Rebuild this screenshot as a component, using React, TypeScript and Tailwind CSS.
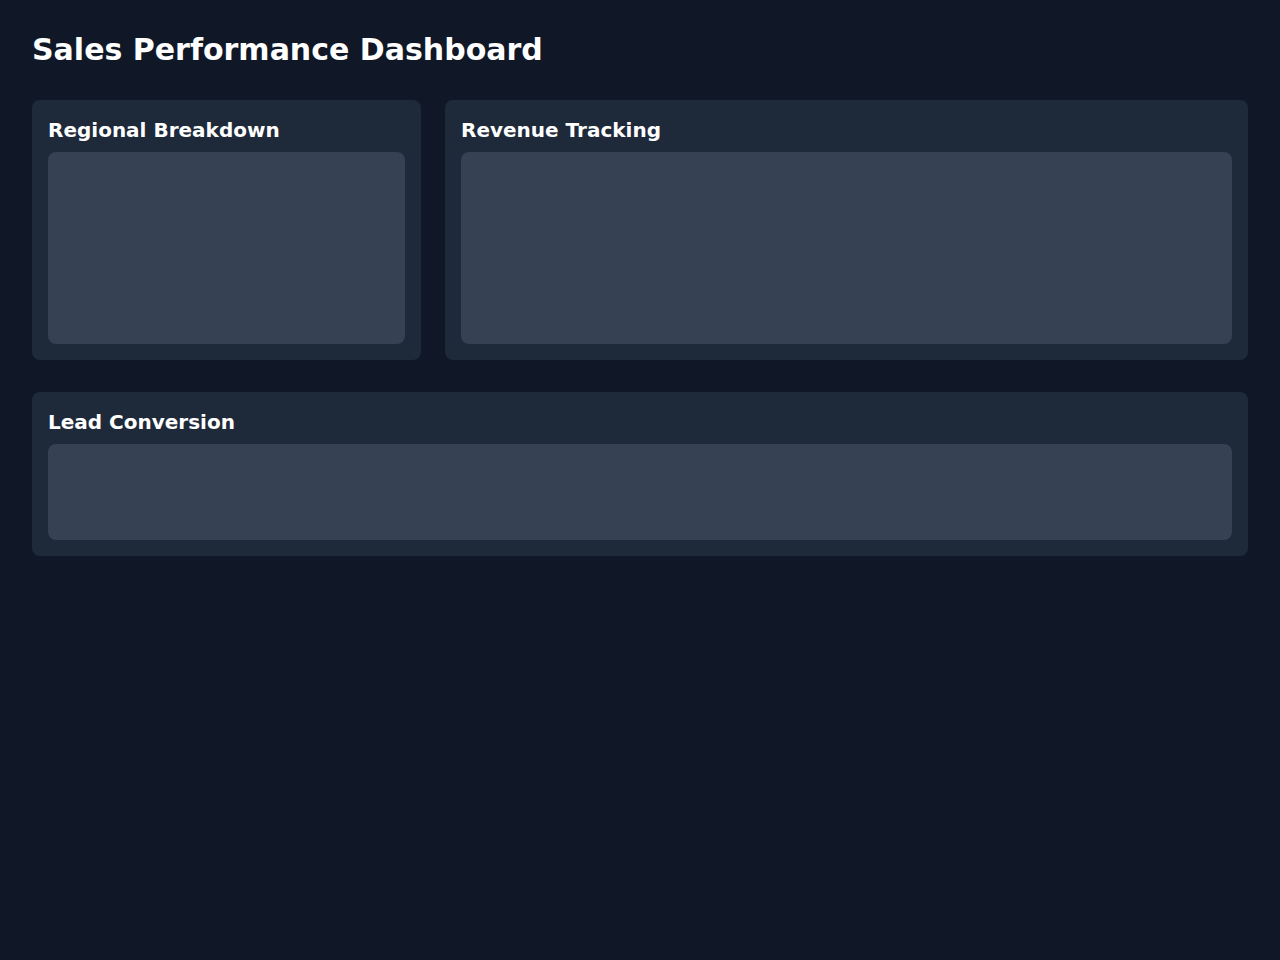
const Panel = ({ title, className, boxHeight }: { title: string; className: string; boxHeight: string }) => {
  return (
    <div className={`bg-gray-800 rounded-lg p-4 ${className}`}>
      <h2 className="text-xl font-bold text-white mb-2">{title}</h2>
      <div className={`bg-gray-700 rounded-lg ${boxHeight}`}></div>
    </div>
  )
}

const App = () => {
  return (
    <div className="min-h-screen bg-gray-900 p-8" style={{ fontFamily: '"DejaVu Sans", sans-serif' }}>
      <h1 className="text-3xl font-bold text-white mb-8">Sales Performance Dashboard</h1>
      <div className="flex gap-6 mb-8">
        <Panel title="Regional Breakdown" className="w-[389px] shrink-0" boxHeight="h-48" />
        <Panel title="Revenue Tracking" className="flex-1" boxHeight="h-48" />
      </div>
      <Panel title="Lead Conversion" className="" boxHeight="h-24" />
    </div>
  )
}

export default App
